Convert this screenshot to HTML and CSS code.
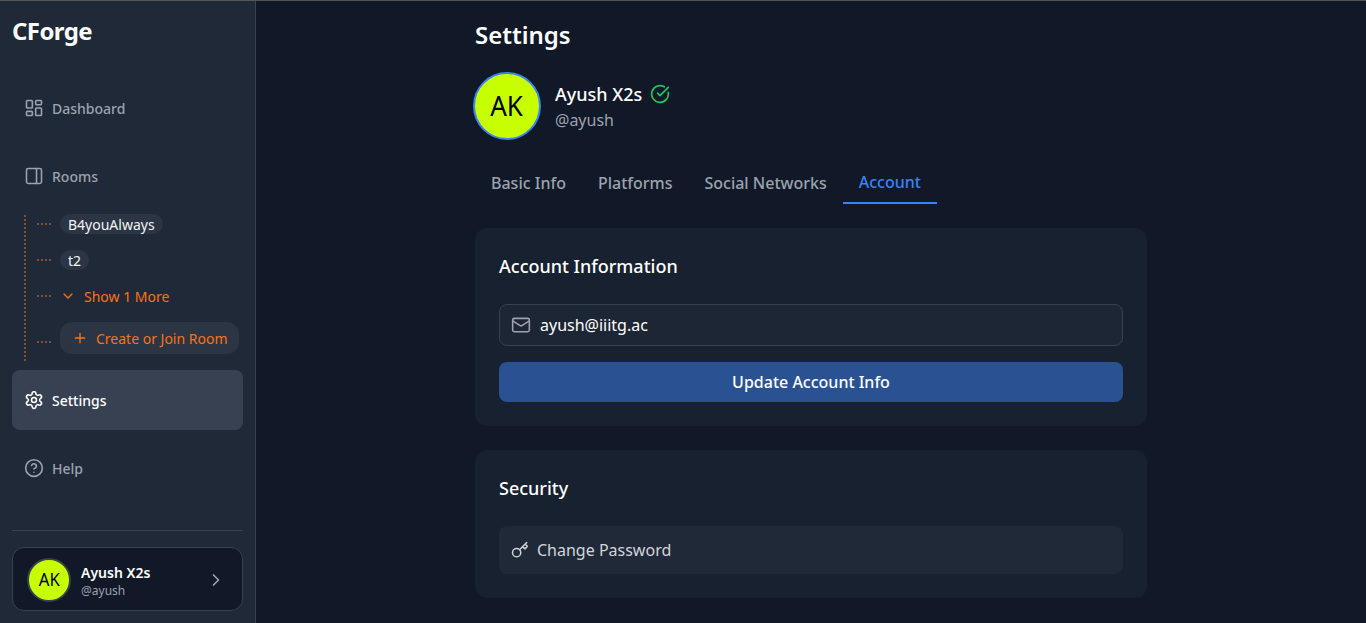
FILE: index.html
```html
<!DOCTYPE html>
<html lang="en">
<head>
<meta charset="utf-8">
<title>CForge</title>
<link rel="stylesheet" href="styles.css">
</head>
<body>
<div class="app">
  <aside class="sidebar">
    <div class="brand">CForge</div>
    <nav class="nav">
      <a class="nav-item">
        <svg class="icon" viewBox="0 0 24 24"><rect x="3" y="3" width="7" height="9" rx="1"/><rect x="14" y="3" width="7" height="5" rx="1"/><rect x="14" y="12" width="7" height="9" rx="1"/><rect x="3" y="16" width="7" height="5" rx="1"/></svg>
        <span>Dashboard</span>
      </a>
      <a class="nav-item">
        <svg class="icon" viewBox="0 0 24 24"><rect x="3" y="3" width="18" height="18" rx="2"/><path d="M15 3v18"/></svg>
        <span>Rooms</span>
      </a>
      <div class="tree">
        <div class="branch"><i class="twig"></i><a class="pill">B4youAlways</a></div>
        <div class="branch"><i class="twig"></i><a class="pill">t2</a></div>
        <div class="branch"><i class="twig"></i><a class="more"><svg class="icon small" viewBox="0 0 24 24"><path d="m6 9 6 6 6-6"/></svg><span>Show 1 More</span></a></div>
        <div class="branch last"><i class="twig"></i><a class="create"><svg class="icon small" viewBox="0 0 24 24"><path d="M5 12h14M12 5v14"/></svg><span>Create or Join Room</span></a></div>
      </div>
      <a class="nav-item active">
        <svg class="icon" viewBox="0 0 24 24"><path d="M12.22 2h-.44a2 2 0 0 0-2 2v.18a2 2 0 0 1-1 1.73l-.43.25a2 2 0 0 1-2 0l-.15-.08a2 2 0 0 0-2.73.73l-.22.38a2 2 0 0 0 .73 2.73l.15.1a2 2 0 0 1 1 1.72v.51a2 2 0 0 1-1 1.74l-.15.09a2 2 0 0 0-.73 2.73l.22.38a2 2 0 0 0 2.73.73l.15-.08a2 2 0 0 1 2 0l.43.25a2 2 0 0 1 1 1.73V20a2 2 0 0 0 2 2h.44a2 2 0 0 0 2-2v-.18a2 2 0 0 1 1-1.73l.43-.25a2 2 0 0 1 2 0l.15.08a2 2 0 0 0 2.73-.73l.22-.39a2 2 0 0 0-.73-2.73l-.15-.08a2 2 0 0 1-1-1.74v-.5a2 2 0 0 1 1-1.74l.15-.09a2 2 0 0 0 .73-2.73l-.22-.38a2 2 0 0 0-2.73-.73l-.15.08a2 2 0 0 1-2 0l-.43-.25a2 2 0 0 1-1-1.73V4a2 2 0 0 0-2-2z"/><circle cx="12" cy="12" r="3"/></svg>
        <span>Settings</span>
      </a>
      <a class="nav-item">
        <svg class="icon" viewBox="0 0 24 24"><circle cx="12" cy="12" r="10"/><path d="M9.09 9a3 3 0 0 1 5.83 1c0 2-3 3-3 3M12 17h.01"/></svg>
        <span>Help</span>
      </a>
    </nav>
    <div class="account">
      <a class="user-card">
        <div class="avatar avatar-sm"><span>AK</span></div>
        <div class="user-text">
          <div class="user-name">Ayush X2s</div>
          <div class="user-handle">@ayush</div>
        </div>
        <svg class="icon" viewBox="0 0 24 24"><path d="m9 18 6-6-6-6"/></svg>
      </a>
    </div>
  </aside>
  <main class="main">
    <div class="content">
      <h1>Settings</h1>
      <section class="profile">
        <div class="avatar avatar-lg"><span>AK</span></div>
        <div>
          <div class="profile-name">Ayush X2s
            <svg class="icon verified" viewBox="0 0 24 24"><path d="M21.801 10A10 10 0 1 1 17 3.335"/><path d="m9 11 3 3L22 4"/></svg>
          </div>
          <div class="profile-handle">@ayush</div>
        </div>
      </section>
      <div class="tabs">
        <a class="tab">Basic Info</a>
        <a class="tab">Platforms</a>
        <a class="tab">Social Networks</a>
        <a class="tab selected">Account</a>
      </div>
      <section class="panel">
        <h2>Account Information</h2>
        <div class="field">
          <svg class="icon" viewBox="0 0 24 24"><rect x="2" y="4" width="20" height="16" rx="2"/><path d="m22 7-8.97 5.7a1.94 1.94 0 0 1-2.06 0L2 7"/></svg>
          <span>ayush@iiitg.ac</span>
        </div>
        <button class="update">Update Account Info</button>
      </section>
      <section class="panel">
        <h2>Security</h2>
        <a class="password">
          <svg class="icon key" viewBox="0 0 24 24"><path d="m15.5 7.5 2.3 2.3a1 1 0 0 0 1.4 0l2.1-2.1a1 1 0 0 0 0-1.4L19 4M21 2l-9.6 9.6"/><circle cx="7.5" cy="15.5" r="5.5"/></svg>
          <span>Change Password</span>
        </a>
      </section>
    </div>
  </main>
</div>
</body>
</html>
```
FILE: styles.css
```css
* { box-sizing: border-box; }
body {
  margin: 0;
  background: #111827;
  color: #fff;
  font: 16px/24px "Noto Sans", sans-serif;
}
h1, h2 { margin: 0; }
.app {
  display: flex;
  height: 623px;
  overflow: hidden;
  border-top: 1px solid #555;
}
.icon {
  width: 20px;
  height: 20px;
  flex: none;
  fill: none;
  stroke: currentColor;
  stroke-width: 2;
  stroke-linecap: round;
  stroke-linejoin: round;
}
.sidebar {
  width: 256px;
  flex: none;
  display: flex;
  flex-direction: column;
  padding: 0 12px 12px;
  background: #1f2937;
  border-right: 1px solid #374151;
}
.brand {
  padding-top: 14px;
  height: 77px;
  font-size: 24px;
  line-height: 32px;
  font-weight: 700;
  letter-spacing: -0.6px;
}
.nav {
  display: flex;
  flex-direction: column;
  gap: 8px;
}
.nav-item {
  display: flex;
  align-items: center;
  gap: 8px;
  height: 60px;
  padding: 0 12px;
  border-radius: 8px;
  color: #9ca3af;
  font-size: 14px;
  font-weight: 500;
  line-height: 20px;
}
.nav-item .icon { stroke-width: 1.9; }
.nav-item span { padding-top: 2px; }
.nav-item.active { background: #374151; color: #fff; }
.tree {
  position: relative;
  height: 148px;
  padding-left: 25px;
  font-size: 14px;
  line-height: 20px;
}
.tree::before {
  content: "";
  position: absolute;
  left: 12px;
  top: 1px;
  height: 146px;
  border-left: 2px dotted #86502f;
}
.branch {
  display: flex;
  align-items: center;
  gap: 9px;
  height: 20px;
  margin-bottom: 16px;
}
.branch.last { height: 32px; }
.twig { width: 14px; border-top: 2px dotted #86502f; }
.branch.last .twig { margin-top: 7px; }
.pill {
  height: 20px;
  padding: 1px 8px 0;
  border-radius: 10px;
  background: #2b3544;
  color: #f3f4f6;
}
.more, .create {
  display: flex;
  align-items: center;
  gap: 8px;
  color: #f97316;
}
.more { height: 20px; }
.more span, .create span { padding-top: 2px; }
.icon.small { width: 16px; height: 16px; }
.create {
  height: 32px;
  padding: 0 11px 0 12px;
  border-radius: 12px;
  background: #2b3544;
}
.account {
  margin-top: auto;
  padding-top: 16px;
  border-top: 1px solid #374151;
}
.user-card {
  display: flex;
  align-items: center;
  height: 64px;
  padding: 2px 16px 0 14px;
  border: 1px solid #374151;
  border-radius: 12px;
  background: #111827;
}
.user-card .icon { color: #9ca3af; }
.user-text { flex: 1; margin-left: 10px; padding-top: 2px; }
.user-name { font-size: 14px; line-height: 20px; font-weight: 600; }
.user-handle { font-size: 12px; line-height: 16px; color: #9ca3af; }
.avatar {
  display: flex;
  align-items: center;
  justify-content: center;
  flex: none;
  border-radius: 50%;
  background: #c8ff00;
  color: #000;
}
.avatar span { transform: translateY(-1px) scaleX(0.93); }
.avatar-sm { width: 44px; height: 44px; border: 2px solid #374151; font-size: 18px; }
.avatar-lg { width: 68px; height: 68px; margin: -2px; border: 2px solid #3b82f6; font-size: 28px; }
.main { flex: 1; }
.content { width: 672px; margin: 0 auto; padding-top: 18px; }
h1 { font-size: 24px; line-height: 32px; font-weight: 600; }
.profile {
  display: flex;
  align-items: center;
  gap: 16px;
  height: 64px;
  margin-top: 23px;
}
.profile-name {
  display: flex;
  align-items: center;
  gap: 8px;
  font-size: 18px;
  line-height: 28px;
  font-weight: 500;
}
.profile-handle { color: #9ca3af; }
.verified { color: #22c55e; }
.tabs {
  display: flex;
  height: 42px;
  margin: 24px 0;
}
.tab {
  padding: 9px 16px;
  font-weight: 500;
  color: #9ca3af;
}
.tab.selected {
  padding-top: 8px;
  color: #3b82f6;
  border-bottom: 2px solid #3b82f6;
}
.panel {
  padding: 24px;
  margin-bottom: 24px;
  border-radius: 12px;
  background: #18212f;
}
h2 {
  margin-bottom: 24px;
  font-size: 18px;
  line-height: 28px;
  font-weight: 500;
}
.field {
  display: flex;
  align-items: center;
  gap: 9px;
  height: 42px;
  padding: 0 11px;
  border: 1px solid #374151;
  border-radius: 8px;
  background: #1d2634;
}
.field .icon { color: #9ca3af; stroke-width: 1.9; }
.update {
  display: block;
  width: 100%;
  height: 40px;
  margin-top: 16px;
  border: 0;
  border-radius: 8px;
  background: #2a5292;
  color: #fff;
  font: 500 16px/24px "Noto Sans", sans-serif;
}
.password {
  display: flex;
  align-items: center;
  gap: 8px;
  height: 48px;
  padding: 0 12px;
  border-radius: 8px;
  background: #202937;
  color: #d1d5db;
}
.icon.key { width: 18px; height: 18px; }
```
